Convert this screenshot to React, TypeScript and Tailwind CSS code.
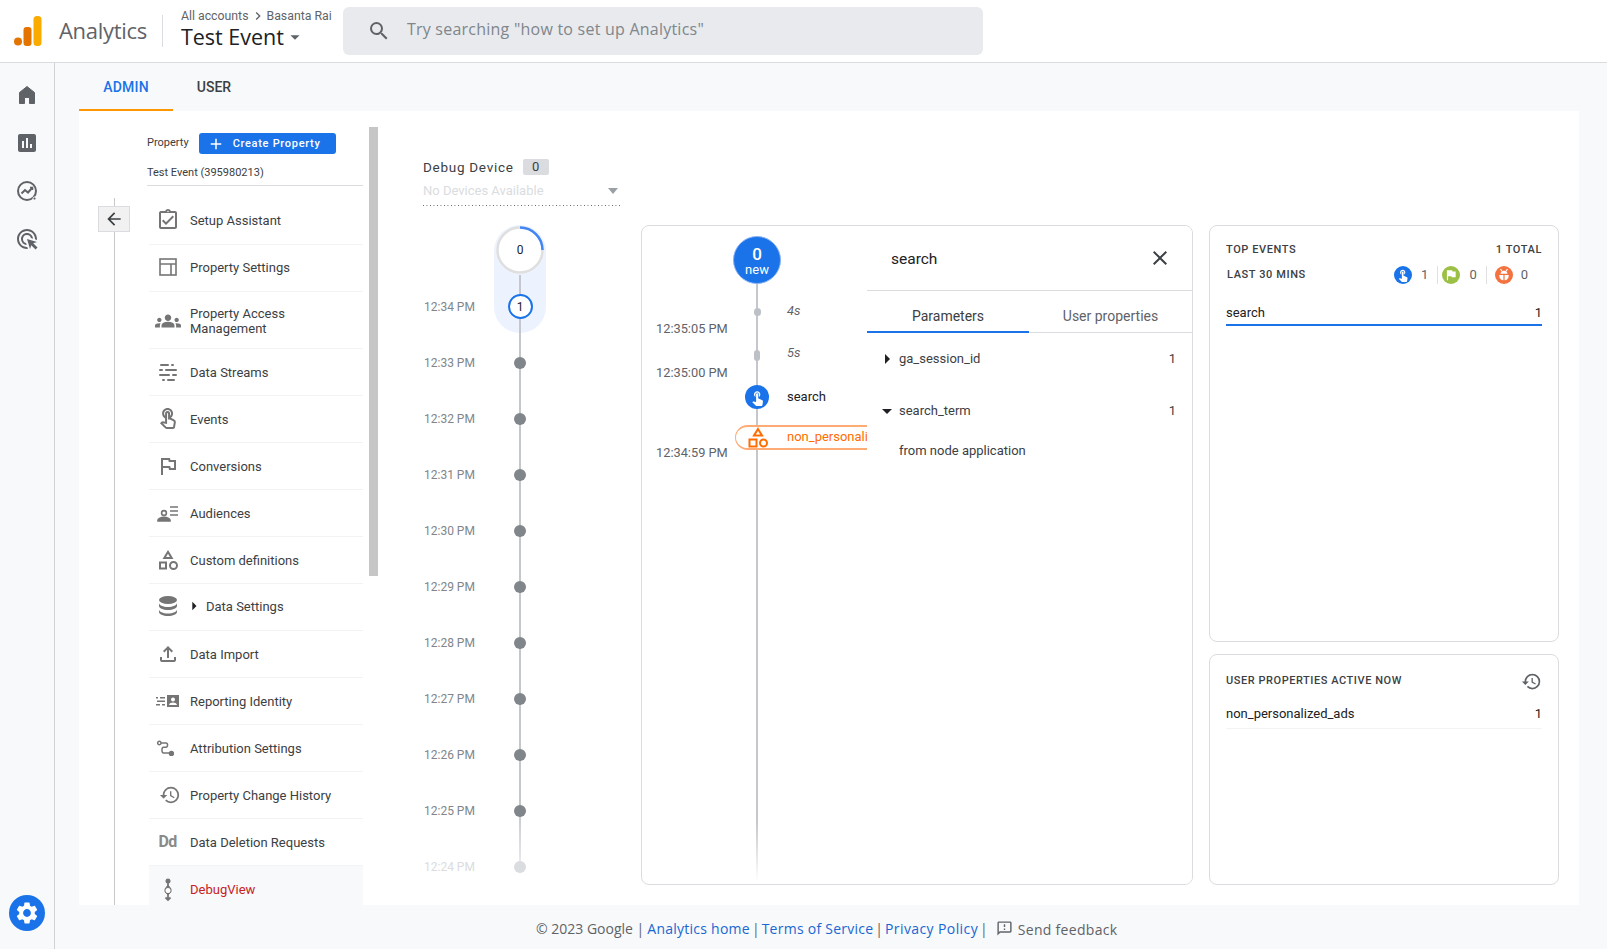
import React from 'react';
import {
  MdAssessment,
  MdAdsClick,
  MdSettings,
  MdSearch,
  MdClose,
  MdAdd,
  MdArrowBack,
  MdArrowDropDown,
  MdArrowRight,
  MdChevronRight,
  MdOutlineAssignmentTurnedIn,
  MdGroups,
  MdOutlineTouchApp,
  MdTouchApp,
  MdOutlineFlag,
  MdFlag,
  MdOutlineCategory,
  MdOutlineFileUpload,
  MdHistory,
  MdOutlineFeedback,
} from 'react-icons/md';

const HomeIcon = () => (
  <svg width="24" height="24" viewBox="0 0 24 24" fill="#5f6368" stroke="#5f6368" strokeWidth="1" strokeLinejoin="round">
    <path d="M12 3.500L4.500 9.500V20.500H9.500V14.500H14.500V20.500H19.500V9.500z" />
  </svg>
);

const ExploreIcon = () => (
  <svg width="24" height="24" viewBox="0 0 24 24" fill="none" stroke="#5f6368" strokeWidth="2">
    <circle cx="12" cy="12" r="9" />
    <path d="M6.500 14.500l3.500-3.500 3 2.500 4.500-5" />
    <path d="M15 8.500h2.500V11" strokeWidth="1.500" />
    <circle cx="19.500" cy="19.500" r="1.500" fill="#5f6368" stroke="#f8f9fa" strokeWidth="1" />
  </svg>
);

const LayoutIcon = () => (
  <svg width="24" height="24" viewBox="0 0 24 24" fill="none" stroke="#757575" strokeWidth="1.600">
    <rect x="4" y="4" width="16" height="16" />
    <path d="M4 9h16M15 9v11" />
  </svg>
);

const StreamsIcon = () => (
  <svg width="24" height="24" viewBox="0 0 24 24" fill="#757575">
    <rect x="4" y="4" width="9" height="2" rx="1" />
    <rect x="15" y="4" width="3" height="2" rx="1" />
    <rect x="3" y="9" width="4" height="2" rx="1" />
    <rect x="9" y="9" width="12" height="2" rx="1" />
    <rect x="3" y="14" width="11" height="2" rx="1" />
    <rect x="16" y="14" width="5" height="2" rx="1" />
    <rect x="6" y="19" width="3" height="2" rx="1" />
    <rect x="11" y="19" width="8" height="2" rx="1" />
  </svg>
);

const AudienceIcon = () => (
  <svg width="24" height="24" viewBox="0 0 24 24" fill="none" stroke="#757575" strokeWidth="1.600">
    <circle cx="8" cy="12" r="2.400" />
    <path d="M2 20v-1c0-1.500 3-2.600 6-2.600s6 1.100 6 2.600v1z" fill="#757575" />
    <path d="M14 6h8M14 10h8M14 14h8" />
  </svg>
);

const DatabaseIcon = () => (
  <svg width="24" height="24" viewBox="0 0 24 24" fill="#757575">
    <ellipse cx="12" cy="6" rx="9" ry="4" />
    <path d="M3 9c0 2.200 4 4 9 4s9-1.800 9-4v3c0 2.200-4 4-9 4s-9-1.800-9-4z" />
    <path d="M3 15.500c0 2.200 4 4 9 4s9-1.800 9-4V18c0 2.200-4 4-9 4s-9-1.800-9-4z" />
  </svg>
);

const IdentityIcon = () => (
  <svg width="24" height="24" viewBox="0 0 24 24" fill="#757575">
    <rect x="-1" y="8" width="3" height="1.500" />
    <rect x="4" y="8" width="5" height="1.500" />
    <rect x="1" y="11.500" width="8" height="1.500" />
    <rect x="-1" y="15" width="5" height="1.500" />
    <rect x="6" y="15" width="3" height="1.500" />
    <path d="M11 6h12v12H11zm6 2.500a2 2 0 100 4 2 2 0 000-4zM13 16h8c0-1.700-2.500-2.500-4-2.500s-4 .8-4 2.500z" fillRule="evenodd" />
  </svg>
);

const AttributionIcon = () => (
  <svg width="20" height="20" viewBox="0 0 24 24" fill="none" stroke="#757575" strokeWidth="1.800" className="-ml-[4px]">
    <circle cx="4" cy="6" r="2" />
    <path d="M6 6h6c2.500 0 2.500 5 0 5H9c-2.500 0-2.500 7 0 7h7" />
    <circle cx="18.500" cy="18.500" r="2.300" fill="#757575" />
  </svg>
);

const DebugIcon = () => (
  <svg width="24" height="24" viewBox="0 0 24 24" fill="none" stroke="#757575" strokeWidth="1.800">
    <circle cx="12" cy="3" r="2.500" fill="#757575" stroke="none" />
    <path d="M12 4v4M12 17v5M9.500 19.500L12 22l2.500-2.500" />
    <path d="M12 7l-3 4v3l3 3 3-3v-3z" strokeWidth="1" fill="#757575" />
    <circle cx="12" cy="12.500" r="2.500" fill="#fff" stroke="none" />
  </svg>
);

const ShapesIcon = () => (
  <svg width="24" height="24" viewBox="0 0 24 24" fill="none" stroke="#ff6d00" strokeWidth="2">
    <path d="M12 3l4 6.500H8z" />
    <rect x="3.500" y="13.500" width="7" height="7" />
    <circle cx="17.500" cy="17" r="3.500" />
  </svg>
);

const BugIcon = () => (
  <svg width="14" height="14" viewBox="0 0 24 24" fill="#fff">
    <path d="M4 12h7v9c-3.900-.3-7-3-7-7zM13 12h7v2c0 4-3.100 6.700-7 7z" />
    <path d="M6 10c0-3 2.700-5.500 6-5.500s6 2.500 6 5.500z" />
    <path d="M6 2l3 4M18 2l-3 4" stroke="#fff" strokeWidth="2" />
  </svg>
);

const navRows = [
  { label: 'Setup Assistant', icon: <MdOutlineAssignmentTurnedIn size={24} />, raised: true },
  { label: 'Property Settings', icon: <LayoutIcon />, raised: true },
  { label: 'Property Access Management', icon: <MdGroups size={26} />, tall: true },
  { label: 'Data Streams', icon: <StreamsIcon /> },
  { label: 'Events', icon: <MdOutlineTouchApp size={24} /> },
  { label: 'Conversions', icon: <MdOutlineFlag size={24} /> },
  { label: 'Audiences', icon: <AudienceIcon /> },
  { label: 'Custom definitions', icon: <MdOutlineCategory size={24} /> },
  { label: 'Data Settings', icon: <DatabaseIcon />, expandable: true, raised: true },
  { label: 'Data Import', icon: <MdOutlineFileUpload size={24} /> },
  { label: 'Reporting Identity', icon: <IdentityIcon /> },
  { label: 'Attribution Settings', icon: <AttributionIcon /> },
  { label: 'Property Change History', icon: <MdHistory size={22} className="ml-[4px]" /> },
  {
    label: 'Data Deletion Requests',
    icon: <span className="text-[16px] font-bold text-[#8a8a8a] tracking-tighter">Dd</span>,
  },
];

const minuteTimes = [
  '12:34 PM',
  '12:33 PM',
  '12:32 PM',
  '12:31 PM',
  '12:30 PM',
  '12:29 PM',
  '12:28 PM',
  '12:27 PM',
  '12:26 PM',
  '12:25 PM',
  '12:24 PM',
];

const App = () => {
  return (
    <div className="w-[1607px] h-[949px] overflow-hidden flex flex-col bg-[#f8f9fa] font-['Roboto',sans-serif] text-[#202124]">
      {/* Top bar */}
      <header className="h-[63px] shrink-0 bg-white border-b border-[#dadce0] flex items-center">
        <svg width="28" height="30" viewBox="0 0 28 30" className="ml-[14px]">
          <circle cx="4" cy="25.500" r="4" fill="#e37400" />
          <rect x="9.500" y="11" width="8" height="19" rx="3" fill="#e37400" />
          <rect x="19.500" y="0" width="8" height="30" rx="3.500" fill="#f9ab00" />
        </svg>
        <span className="ml-[17px] pb-[2px] text-[22px] text-[#5f6368] font-['Open_Sans',sans-serif] tracking-[-0.3px]">
          Analytics
        </span>
        <div className="ml-[15px] w-px h-[32px] bg-[#dadce0]" />
        <div className="ml-[18px] w-[162px] pb-[4px]">
          <div className="flex items-center text-[12.300px] leading-[16px] text-[#5f6368]">
            All accounts
            <MdChevronRight size={16} className="mx-[1px]" />
            Basanta Rai
          </div>
          <div className="flex items-center text-[21.500px] leading-[26px] text-[#202124] font-['Open_Sans',sans-serif]">
            Test Event
            <MdArrowDropDown size={22} className="text-[#5f6368]" />
          </div>
        </div>
        <div className="w-[640px] h-[48px] bg-[#e8eaed] rounded-[6px] flex items-center">
          <MdSearch size={24} className="ml-[24px] text-[#5f6368]" />
          <span className="ml-[16px] pb-[5px] text-[16px] text-[#80868b] tracking-[0.23px] font-['Open_Sans',sans-serif]">
            Try searching "how to set up Analytics"
          </span>
        </div>
      </header>

      <div className="flex-1 flex min-h-0">
        {/* Left rail */}
        <aside className="w-[55px] shrink-0 border-r border-[#d0d2d6] flex flex-col items-center text-[#5f6368]">
          <div className="mt-[20px] flex flex-col items-center gap-[24px]">
            <HomeIcon />
            <MdAssessment size={24} />
            <ExploreIcon />
            <MdAdsClick size={24} />
          </div>
          <div className="mt-auto mb-[18px] w-[36px] h-[36px] rounded-full bg-[#1a73e8] flex items-center justify-center">
            <MdSettings size={26} className="text-white" />
          </div>
        </aside>

        <div className="flex-1 flex flex-col min-w-0 pl-[24px] pr-[28px]">
          {/* Tabs */}
          <div className="h-[48px] shrink-0 flex text-[14px] font-medium">
            <div className="w-[94px] pt-[2px] flex items-center justify-center text-[#1a73e8] tracking-[0.2px] border-b-2 border-[#ff9800]">
              ADMIN
            </div>
            <div className="w-[82px] flex items-center justify-center text-[#3c4043]">USER</div>
          </div>

          {/* Admin panel */}
          <main className="h-[794px] bg-white flex overflow-hidden">
            <div className="w-[68px] shrink-0 relative">
              <div className="ml-[35px] mt-[87px] h-full border-l border-[#c8c8c8]" />
              <button className="absolute left-[19px] top-[95px] w-[32px] h-[26px] bg-[#f1f1f1] border border-[#dadce0] flex items-center justify-center text-[#3c4043]">
                <MdArrowBack size={20} />
              </button>
            </div>

            {/* Nav column */}
            <nav className="w-[216px] shrink-0 pt-[22px]">
              <div className="flex items-center h-[21px]">
                <span className="text-[11px] text-[#3c4043]">Property</span>
                <button className="ml-[10px] w-[137px] h-[21px] pt-[1px] bg-[#1a73e8] rounded-[3px] flex items-center text-white text-[11px] font-medium tracking-[0.7px]">
                  <MdAdd size={18} className="ml-[8px]" />
                  <span className="ml-[8px]">Create Property</span>
                </button>
              </div>
              <div className="h-[32px] flex items-center text-[11px] text-[#3c4043] border-b border-[#dadce0] pt-[7px]">
                Test Event (395980213)
              </div>
              <ul className="mt-[12px] ml-[2px] text-[13px] text-[#3c4043]">
                {navRows.map((row) => (
                  <li
                    key={row.label}
                    className={`${row.tall ? 'h-[57px] pt-[2px]' : 'h-[47px]'} ${row.raised ? 'pb-[2px]' : ''} flex items-center border-b border-[#f1f3f4]`}
                  >
                    <span className="w-[41px] shrink-0 flex justify-center pr-[4px] text-[#757575]">{row.icon}</span>
                    {row.expandable && <MdArrowRight size={20} className="-ml-[6px] mr-[2px] text-[#202124]" />}
                    <span className={`leading-[15px] ${row.tall ? 'w-[130px]' : 'whitespace-nowrap'}`}>{row.label}</span>
                  </li>
                ))}
                <li className="h-[47px] flex items-center bg-[#f8f9fa]">
                  <span className="w-[41px] shrink-0 flex justify-center pr-[4px]">
                    <DebugIcon />
                  </span>
                  <span className="text-[#c5221f]">DebugView</span>
                </li>
              </ul>
            </nav>

            {/* Scrollbar */}
            <div className="ml-[6px] mt-[16px] w-[9px] h-[449px] shrink-0 bg-[#c6c6c6]" />

            {/* Minute timeline */}
            <section className="ml-[45px] w-[197px] shrink-0">
              <div className="mt-[46px] flex items-center h-[20px]">
                <span className="text-[13.500px] tracking-[0.72px] text-[#3c4043]">Debug Device</span>
                <span className="ml-[9px] w-[26px] h-[16px] rounded-[2px] bg-[#dadce0] text-[13px] text-[#3c4043] flex items-center justify-center">
                  0
                </span>
              </div>
              <div className="h-[28px] flex items-start justify-between pt-[4px] text-[13px] text-[#dadce0]">
                No Devices Available
                <span className="mt-[7px] mr-[2px] w-0 h-0 border-x-[5px] border-x-transparent border-t-[6px] border-t-[#9aa0a6]" />
              </div>
              <div className="h-px bg-[linear-gradient(to_right,#5f6368_1px,transparent_1px)] bg-[length:3.500px_1px]" />
              <div className="mt-[19px] flex">
                <div className="w-[71px] pt-[54px] pl-[1px]">
                  {minuteTimes.map((t, i) => (
                    <div
                      key={t}
                      className={`h-[56px] flex items-center text-[12px] ${i === 10 ? 'text-[#dadce0]' : 'text-[#80868b]'}`}
                    >
                      {t}
                    </div>
                  ))}
                </div>
                <div className="w-[52px] relative flex flex-col items-center">
                  <div className="w-[52px] h-[108px] rounded-full bg-[#edf3fe] flex flex-col items-center pt-[1px] relative">
                    <div className="absolute left-[25px] top-[50px] w-[2px] h-[58px] bg-[#c4c7cc]" />
                    <div className="relative w-[48px] h-[48px]">
                      <svg width="48" height="48" viewBox="0 0 48 48" className="absolute inset-0">
                        <circle cx="24" cy="24" r="22.500" fill="#fff" stroke="#dfdfdf" strokeWidth="2.500" />
                        <path d="M24 1.500A22.500 22.500 0 0 1 46.500 24" fill="none" stroke="#4285f4" strokeWidth="2.500" />
                      </svg>
                      <span className="absolute inset-0 flex items-center justify-center text-[12px] text-[#202124]">0</span>
                    </div>
                    <div className="relative mt-[20px] w-[25px] h-[25px] rounded-full border-2 border-[#1a73e8] bg-white flex items-center justify-center text-[12px] text-[#202124]">
                      1
                    </div>
                  </div>
                  <div className="absolute left-[25px] top-[108px] w-[2px] h-[530px] bg-linear-to-b from-[#c4c7cc] from-90% to-[#e8eaed]" />
                  <div className="mt-[2px] relative">
                    {minuteTimes.slice(1).map((t, i) => (
                      <div key={t} className="h-[56px] flex items-center justify-center">
                        <span className={`w-[12px] h-[12px] rounded-full ${i === 9 ? 'bg-[#dadce0]' : 'bg-[#80868b]'}`} />
                      </div>
                    ))}
                  </div>
                </div>
              </div>
            </section>

            {/* Event stream card */}
            <section className="ml-[21px] mt-[114px] w-[552px] h-[660px] shrink-0 border border-[#dadce0] rounded-[8px] flex overflow-hidden">
              <div className="w-[225px] shrink-0 relative overflow-hidden pt-[10px]">
                <div className="absolute left-[114px] top-[50px] w-[2px] h-[606px] bg-linear-to-b from-[#c4c7cc] from-90% to-white" />
                <div className="relative ml-[91px] w-[48px] h-[48px] pt-[3px] rounded-full bg-[#1a73e8] border border-[#8ab4f8] text-white flex flex-col items-center justify-center">
                  <span className="text-[17px] leading-[17px] font-medium">0</span>
                  <span className="text-[13px] leading-[14px]">new</span>
                </div>

                <div className="relative flex h-[50px] text-[12.800px]">
                  <span className="w-[91px] shrink-0 pl-[14px] mt-[36px] leading-[18px] whitespace-nowrap text-[#5f6368]">12:35:05 PM</span>
                  <span className="w-[48px] flex justify-center">
                    <span className="mt-[24px] w-[7px] h-[8px] rounded-full bg-[#bdc1c6]" />
                  </span>
                  <span className="ml-[6px] mt-[18px] leading-[18px] italic text-[#5f6368]">4s</span>
                </div>
                <div className="relative flex h-[44px] text-[12.800px]">
                  <span className="w-[91px] shrink-0 pl-[14px] mt-[30px] leading-[18px] whitespace-nowrap text-[#5f6368]">12:35:00 PM</span>
                  <span className="w-[48px] flex justify-center">
                    <span className="mt-[16px] w-[6px] h-[11px] rounded-full bg-[#bdc1c6]" />
                  </span>
                  <span className="ml-[6px] mt-[10px] leading-[18px] italic text-[#5f6368]">5s</span>
                </div>
                <div className="relative flex h-[38px] text-[13px]">
                  <span className="w-[91px] shrink-0" />
                  <span className="w-[48px] flex justify-center">
                    <span className="mt-[7px] w-[24px] h-[24px] rounded-full bg-[#1a73e8] flex items-center justify-center text-white">
                      <MdTouchApp size={17} />
                    </span>
                  </span>
                  <span className="ml-[6px] mt-[10px] leading-[18px] text-[#202124]">search</span>
                </div>
                <div className="relative flex h-[44px] text-[12.800px]">
                  <span className="w-[91px] shrink-0 pl-[14px] mt-[28px] leading-[18px] whitespace-nowrap text-[#5f6368]">12:34:59 PM</span>
                  <div className="mt-[9px] ml-[2px] h-[25px] w-[140px] shrink-0 flex items-center rounded-l-full border-y-2 border-l border-[#ffab76] bg-white text-[#ff6d00] whitespace-nowrap">
                    <span className="w-[44px] shrink-0 flex justify-center">
                      <ShapesIcon />
                    </span>
                    <span className="ml-[7px] pb-[2px] text-[13px]">non_personali</span>
                  </div>
                </div>
              </div>

              {/* Event details */}
              <div className="flex-1 min-w-0 bg-white relative">
                <div className="h-[65px] border-b border-[#dadce0] flex items-center justify-between pl-[24px] pr-[20px]">
                  <span className="pt-[3px] text-[15.500px] text-[#202124]">search</span>
                  <MdClose size={24} className="text-[#3c4043]" />
                </div>
                <div className="h-[42px] flex border-b border-[#dadce0] text-[14px]">
                  <div className="w-[162px] h-[42px] pt-[11px] flex items-center justify-center border-b-2 border-[#1a73e8] text-[#3c4043]">
                    Parameters
                  </div>
                  <div className="flex-1 pt-[9px] flex items-center justify-center text-[#5f6368]">User properties</div>
                </div>
                <div className="text-[13px] text-[#3c4043] pr-[16px]">
                  <div className="mt-[16px] h-[20px] flex items-center">
                    <span className="w-[32px] flex justify-end">
                      <MdArrowRight size={24} className="text-[#202124]" />
                    </span>
                    <span className="flex-1">ga_session_id</span>
                    <span>1</span>
                  </div>
                  <div className="mt-[32px] h-[20px] flex items-center">
                    <span className="w-[32px] flex justify-end">
                      <MdArrowDropDown size={24} className="text-[#202124]" />
                    </span>
                    <span className="flex-1">search_term</span>
                    <span>1</span>
                  </div>
                  <div className="mt-[20px] h-[20px] pl-[32px] flex items-center">from node application</div>
                </div>
              </div>
            </section>

            {/* Right cards */}
            <div className="ml-[16px] mt-[114px] w-[350px] shrink-0 flex flex-col gap-[12px]">
              <section className="h-[417px] border border-[#dadce0] rounded-[8px] px-[16px] pt-[16px]">
                <div className="flex justify-between text-[11px] leading-[16px] font-medium tracking-[0.6px] text-[#3c4043]">
                  <span>TOP EVENTS</span>
                  <span>1 TOTAL</span>
                </div>
                <div className="mt-[8px] flex items-center h-[18px] text-[#3c4043]">
                  <span className="ml-[1px] pt-[1px] text-[11px] font-medium tracking-[0.6px] text-[#3c4043] flex-1">LAST 30 MINS</span>
                  <span className="w-[18px] h-[18px] rounded-full bg-[#1a73e8] flex items-center justify-center text-white">
                    <MdTouchApp size={14} />
                  </span>
                  <span className="ml-[9px] text-[13px] text-[#5f6368]">1</span>
                  <span className="ml-[9px] w-px h-[18px] bg-[#e0e0e0]" />
                  <span className="ml-[4px] w-[18px] h-[18px] rounded-full bg-[#9cbf45] flex items-center justify-center text-white">
                    <MdFlag size={14} />
                  </span>
                  <span className="ml-[9px] text-[13px] text-[#5f6368]">0</span>
                  <span className="ml-[9px] w-px h-[18px] bg-[#e0e0e0]" />
                  <span className="ml-[8px] w-[18px] h-[18px] rounded-full bg-[#f4723f] flex items-center justify-center">
                    <BugIcon />
                  </span>
                  <span className="ml-[8px] mr-[14px] text-[13px] text-[#5f6368]">0</span>
                </div>
                <div className="mt-[20px] h-[22px] flex items-start justify-between text-[13px] leading-[18px] text-[#202124] border-b-2 border-[#1a73e8]">
                  <span>search</span>
                  <span>1</span>
                </div>
              </section>
              <section className="h-[231px] border border-[#dadce0] rounded-[8px] px-[16px] pt-[14px]">
                <div className="flex items-center justify-between h-[24px] text-[11px] font-medium tracking-[0.55px] text-[#3c4043]">
                  <span>USER PROPERTIES ACTIVE NOW</span>
                  <MdHistory size={21} className="text-[#5f6368]" />
                </div>
                <div className="mt-[12px] h-[24px] flex items-start justify-between text-[13px] leading-[18px] text-[#202124] border-b border-[#f1f3f4]">
                  <span>non_personalized_ads</span>
                  <span>1</span>
                </div>
              </section>
            </div>
          </main>

          {/* Footer */}
          <footer className="h-[44px] pt-[3px] flex items-center pl-[457px] text-[14px] text-[#5f6368] font-['Open_Sans',sans-serif] whitespace-nowrap">
            <span className="mr-[3px]">© 2023 Google |</span>
            <span className="text-[#1967d2] tracking-[0.25px]">Analytics home</span>
            <span className="mx-[2px]">|</span>
            <span className="text-[#1967d2] tracking-[0.25px]">Terms of Service</span>
            <span className="mx-[2px]">|</span>
            <span className="text-[#1967d2] tracking-[0.4px]">Privacy Policy</span>
            <span className="ml-[2px]">|</span>
            <MdOutlineFeedback size={17} className="ml-[8px] mr-[5px]" />
            <span className="tracking-[0.3px] pt-[1px]">Send feedback</span>
          </footer>
        </div>
      </div>
    </div>
  );
};

export default App;
